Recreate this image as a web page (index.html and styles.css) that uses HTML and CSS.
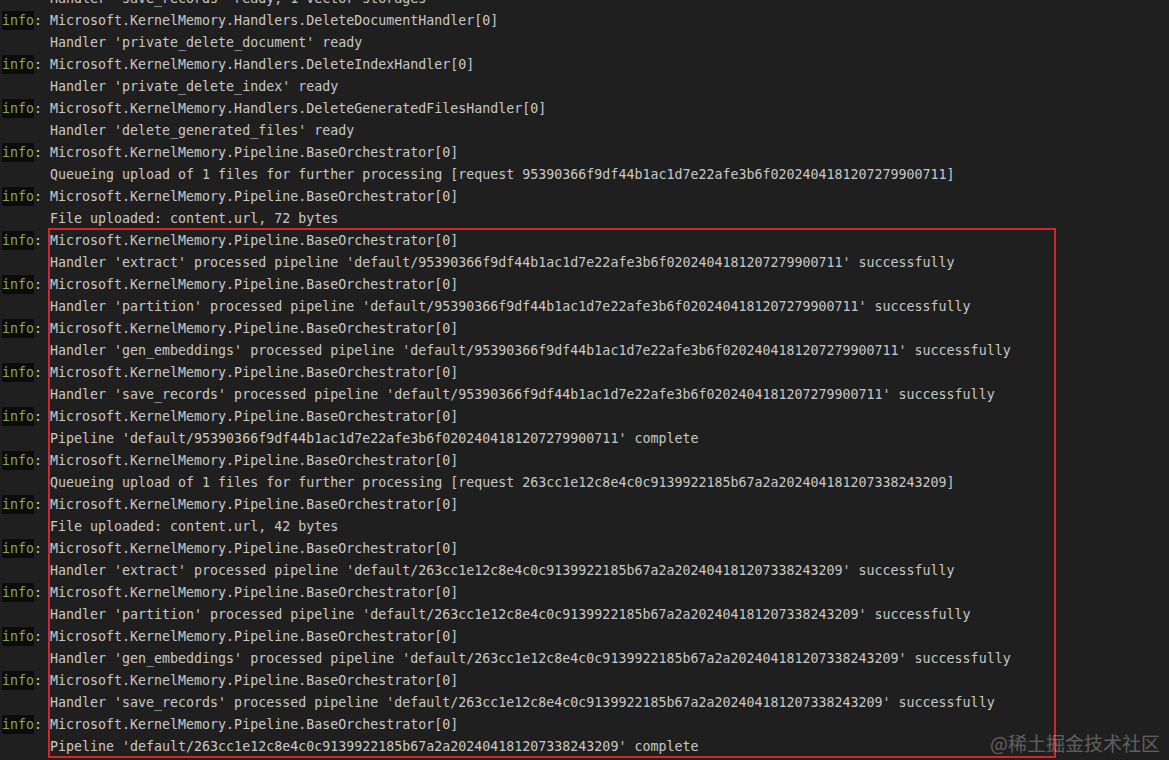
FILE: index.html
```html
<!DOCTYPE html>
<html>
<head>
<meta charset="utf-8">
<link rel="stylesheet" href="styles.css">
</head>
<body>
<div class="log">
  <div class="line"><span class="pfx"></span><span class="msg">Handler 'save_records' ready, 1 vector storages</span></div>
  <div class="line"><span class="pfx"><span class="tag">info</span>:</span><span class="msg">Microsoft.KernelMemory.Handlers.DeleteDocumentHandler[0]</span></div>
  <div class="line"><span class="pfx"></span><span class="msg">Handler 'private_delete_document' ready</span></div>
  <div class="line"><span class="pfx"><span class="tag">info</span>:</span><span class="msg">Microsoft.KernelMemory.Handlers.DeleteIndexHandler[0]</span></div>
  <div class="line"><span class="pfx"></span><span class="msg">Handler 'private_delete_index' ready</span></div>
  <div class="line"><span class="pfx"><span class="tag">info</span>:</span><span class="msg">Microsoft.KernelMemory.Handlers.DeleteGeneratedFilesHandler[0]</span></div>
  <div class="line"><span class="pfx"></span><span class="msg">Handler 'delete_generated_files' ready</span></div>
  <div class="line"><span class="pfx"><span class="tag">info</span>:</span><span class="msg">Microsoft.KernelMemory.Pipeline.BaseOrchestrator[0]</span></div>
  <div class="line"><span class="pfx"></span><span class="msg">Queueing upload of 1 files for further processing [request 95390366f9df44b1ac1d7e22afe3b6f0202404181207279900711]</span></div>
  <div class="line"><span class="pfx"><span class="tag">info</span>:</span><span class="msg">Microsoft.KernelMemory.Pipeline.BaseOrchestrator[0]</span></div>
  <div class="line"><span class="pfx"></span><span class="msg">File uploaded: content.url, 72 bytes</span></div>

  <div class="boxed">
    <div class="pcol">
      <div class="pfx"><span class="tag">info</span>:</div><div class="pfx"></div>
      <div class="pfx"><span class="tag">info</span>:</div><div class="pfx"></div>
      <div class="pfx"><span class="tag">info</span>:</div><div class="pfx"></div>
      <div class="pfx"><span class="tag">info</span>:</div><div class="pfx"></div>
      <div class="pfx"><span class="tag">info</span>:</div><div class="pfx"></div>
      <div class="pfx"><span class="tag">info</span>:</div><div class="pfx"></div>
      <div class="pfx"><span class="tag">info</span>:</div><div class="pfx"></div>
      <div class="pfx"><span class="tag">info</span>:</div><div class="pfx"></div>
      <div class="pfx"><span class="tag">info</span>:</div><div class="pfx"></div>
      <div class="pfx"><span class="tag">info</span>:</div><div class="pfx"></div>
      <div class="pfx"><span class="tag">info</span>:</div><div class="pfx"></div>
      <div class="pfx"><span class="tag">info</span>:</div><div class="pfx"></div>
    </div>
    <div class="box">
      <div class="msg">Microsoft.KernelMemory.Pipeline.BaseOrchestrator[0]</div>
      <div class="msg">Handler 'extract' processed pipeline 'default/95390366f9df44b1ac1d7e22afe3b6f0202404181207279900711' successfully</div>
      <div class="msg">Microsoft.KernelMemory.Pipeline.BaseOrchestrator[0]</div>
      <div class="msg">Handler 'partition' processed pipeline 'default/95390366f9df44b1ac1d7e22afe3b6f0202404181207279900711' successfully</div>
      <div class="msg">Microsoft.KernelMemory.Pipeline.BaseOrchestrator[0]</div>
      <div class="msg">Handler 'gen_embeddings' processed pipeline 'default/95390366f9df44b1ac1d7e22afe3b6f0202404181207279900711' successfully</div>
      <div class="msg">Microsoft.KernelMemory.Pipeline.BaseOrchestrator[0]</div>
      <div class="msg">Handler 'save_records' processed pipeline 'default/95390366f9df44b1ac1d7e22afe3b6f0202404181207279900711' successfully</div>
      <div class="msg">Microsoft.KernelMemory.Pipeline.BaseOrchestrator[0]</div>
      <div class="msg">Pipeline 'default/95390366f9df44b1ac1d7e22afe3b6f0202404181207279900711' complete</div>
      <div class="msg">Microsoft.KernelMemory.Pipeline.BaseOrchestrator[0]</div>
      <div class="msg">Queueing upload of 1 files for further processing [request 263cc1e12c8e4c0c9139922185b67a2a202404181207338243209]</div>
      <div class="msg">Microsoft.KernelMemory.Pipeline.BaseOrchestrator[0]</div>
      <div class="msg">File uploaded: content.url, 42 bytes</div>
      <div class="msg">Microsoft.KernelMemory.Pipeline.BaseOrchestrator[0]</div>
      <div class="msg">Handler 'extract' processed pipeline 'default/263cc1e12c8e4c0c9139922185b67a2a202404181207338243209' successfully</div>
      <div class="msg">Microsoft.KernelMemory.Pipeline.BaseOrchestrator[0]</div>
      <div class="msg">Handler 'partition' processed pipeline 'default/263cc1e12c8e4c0c9139922185b67a2a202404181207338243209' successfully</div>
      <div class="msg">Microsoft.KernelMemory.Pipeline.BaseOrchestrator[0]</div>
      <div class="msg">Handler 'gen_embeddings' processed pipeline 'default/263cc1e12c8e4c0c9139922185b67a2a202404181207338243209' successfully</div>
      <div class="msg">Microsoft.KernelMemory.Pipeline.BaseOrchestrator[0]</div>
      <div class="msg">Handler 'save_records' processed pipeline 'default/263cc1e12c8e4c0c9139922185b67a2a202404181207338243209' successfully</div>
      <div class="msg">Microsoft.KernelMemory.Pipeline.BaseOrchestrator[0]</div>
      <div class="msg">Pipeline 'default/263cc1e12c8e4c0c9139922185b67a2a202404181207338243209' complete</div>
    </div>
  </div>
</div>
<div class="watermark">@稀土掘金技术社区</div>
</body>
</html>
```

FILE: styles.css
```css
html, body {
  margin: 0;
  padding: 0;
  background: #1f1f1f;
  width: 1169px;
  height: 760px;
  overflow: hidden;
}

.log {
  margin-top: -12px;
  font-family: "DejaVu Sans Mono", "Liberation Mono", monospace;
  font-size: 13.3px;
  line-height: 22px;
  color: #c8c8c8;
}

.line {
  display: flex;
  height: 22px;
}

.pfx {
  display: block;
  width: 48px;
  height: 22px;
  padding-left: 2px;
  box-sizing: border-box;
  flex: none;
  white-space: pre;
}

.tag {
  color: #88aa52;
  background: #0b0b0b;
  padding: 2px 0;
}

.msg {
  display: block;
  height: 22px;
  white-space: pre;
}

.line .msg {
  padding-left: 2px;
}

.boxed {
  display: flex;
  align-items: flex-start;
}

.pcol {
  flex: none;
  width: 48px;
}

.box {
  width: 1008px;
  height: 530px;
  box-sizing: border-box;
  border: 2px solid #d3262c;
  margin-top: -2px;
}

.watermark {
  position: absolute;
  right: 9px;
  bottom: 5px;
  font-family: "Noto Sans CJK SC", sans-serif;
  font-size: 19px;
  line-height: 24px;
  color: rgba(255, 255, 255, 0.3);
}
```
